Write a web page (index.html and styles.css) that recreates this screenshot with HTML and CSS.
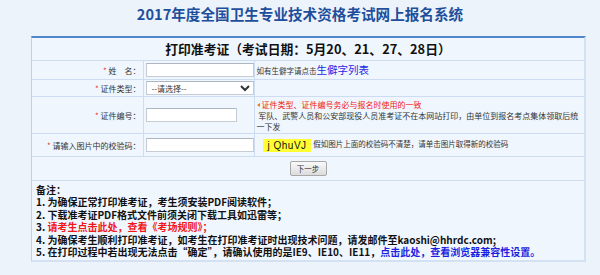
FILE: index.html
```html
<!DOCTYPE html>
<html lang="zh-CN">
<head>
    <meta charset="UTF-8">
    <title>打印准考证</title>
    <link rel="stylesheet" href="styles.css">
</head>
<body>
    <h1 class="site-title">2017年度全国卫生专业技术资格考试网上报名系统</h1>
    <div class="panel">
        <table class="form-table">
            <colgroup>
                <col class="col-label">
                <col class="col-field">
                <col>
            </colgroup>
            <tr class="row-head">
                <th colspan="3" class="form-head">打印准考证（考试日期：5月20、21、27、28日）</th>
            </tr>
            <tr class="row-name">
                <td class="label"><span class="req">*</span> 姓　名：</td>
                <td class="field"><input type="text" class="txt"></td>
                <td class="hint">如有生僻字请点击<a href="#" class="link-big">生僻字列表</a></td>
            </tr>
            <tr class="row-type">
                <td class="label"><span class="req">*</span> 证件类型：</td>
                <td class="field">
                    <select class="sel">
                        <option>--请选择--</option>
                    </select>
                </td>
                <td class="hint"></td>
            </tr>
            <tr class="row-id">
                <td class="label"><span class="req">*</span> 证件编号：</td>
                <td class="field"><input type="text" class="txt short"></td>
                <td class="hint">
                    <div class="warn"><span class="tri"></span>证件类型、证件编号务必与报名时使用的一致</div>
                    <div class="note">&nbsp;军队、武警人员和公安部现役人员准考证不在本网站打印，由单位到报名考点集体领取后统一下发</div>
                </td>
            </tr>
            <tr class="row-code">
                <td class="label"><span class="req">*</span> 请输入图片中的校验码：</td>
                <td class="field"><input type="text" class="txt"></td>
                <td class="hint"><span class="captcha">j QhuVJ</span> 假如图片上面的校验码不清楚，请单击图片取得新的校验码</td>
            </tr>
            <tr class="row-btn">
                <td colspan="3"><button class="btn">下一步</button></td>
            </tr>
            <tr class="row-notes">
                <td colspan="3" class="remarks">
                    <div>备注：</div>
                    <div>1. 为确保正常打印准考证，考生须安装PDF阅读软件；</div>
                    <div>2. 下载准考证PDF格式文件前须关闭下载工具如迅雷等；</div>
                    <div>3. <a href="#" class="red">请考生点击此处，查看《考场规则》；</a></div>
                    <div>4. 为确保考生顺利打印准考证，如考生在打印准考证时出现技术问题，请发邮件至kaoshi@hhrdc.com;</div>
                    <div>5. 在打印过程中若出现无法点击“确定”，请确认使用的是IE9、IE10、IE11，<a href="#" class="blue">点击此处，查看浏览器兼容性设置。</a></div>
                </td>
            </tr>
        </table>
    </div>
</body>
</html>
```

FILE: styles.css
```css
body {
    margin: 0;
    background-color: #edf3fb;
    font-family: "Noto Sans CJK SC", "Noto Sans", sans-serif;
    color: #333;
}
.site-title {
    margin: 0;
    height: 36px;
    line-height: 28px;
    text-align: center;
    font-size: 14.6px;
    font-weight: bold;
    color: #1f4f9c;
}
.panel {
    margin-left: 31px;
    width: 552px;
    border-top: 2px solid #4f86c9;
    border-left: 1px solid #bcd1ec;
    border-right: 2px solid #d3e1f2;
    border-bottom: 2px solid #d3e1f2;
    background: #f0f6fd;
}
.form-table {
    width: 100%;
    border-collapse: collapse;
    table-layout: fixed;
}
.col-label {
    width: 111px;
}
.col-field {
    width: 111px;
}
.form-table td,
.form-table th {
    padding: 0;
    border-top: 1px solid #cddcf0;
    line-height: 11px;
    font-size: 8px;
}
.form-table tr:first-child th {
    border-top: none;
}
.form-head {
    font-size: 12.8px !important;
    line-height: 16px !important;
    font-weight: bold;
    color: #111;
    text-align: center;
}
.label {
    padding-right: 2px !important;
    text-align: right;
    color: #333;
    border-right: 1px solid #cddcf0;
}
.req {
    color: #e53333;
}
.field {
    padding-left: 2px !important;
    border-right: 1px solid #cddcf0;
}
.hint {
    padding-left: 2px !important;
    font-size: 7.5px !important;
    color: #333;
}
.row-head th { height: 22px; }
.row-name td { height: 18px; }
.row-type td { height: 16px; }
.row-id td { height: 36px; }
.row-code td { height: 22px; }
.row-btn td { height: 23px; text-align: center; }
.txt,
.sel {
    box-sizing: border-box;
    width: 108px;
    height: 14px;
    margin: 0;
    padding: 0 3px;
    border: 1px solid #c5ccd6;
    border-top-color: #aeb6c1;
    background: #fff;
    font-size: 8px;
    vertical-align: middle;
}
.sel {
    font-family: "Noto Sans CJK SC", sans-serif;
    color: #333;
    padding: 0 1px;
}
.txt.short {
    width: 91px;
}
.link-big {
    font-size: 10.5px;
    line-height: 11px;
    color: #2727e6;
    text-decoration: none;
}
.warn {
    color: #f02020;
    font-size: 8px;
    line-height: 11px;
}
.tri {
    display: inline-block;
    width: 0;
    height: 0;
    margin-right: 2px;
    border-top: 2px solid transparent;
    border-bottom: 2px solid transparent;
    border-right: 3px solid #f07a1a;
    vertical-align: middle;
}
.note {
    font-size: 8px;
    line-height: 11px;
    color: #333;
}
.captcha {
    display: inline-block;
    width: 48px;
    height: 13px;
    margin-left: 6px;
    margin-right: 1px;
    padding-left: 5px;
    box-sizing: border-box;
    background: #ffff33;
    font-family: "Liberation Sans", sans-serif;
    font-size: 10px;
    line-height: 13px;
    color: #111;
    vertical-align: middle;
    letter-spacing: 0.5px;
}
.btn {
    width: 37px;
    height: 15px;
    padding: 0;
    border: 1px solid #a8a8a8;
    border-radius: 2px;
    background: linear-gradient(#fafafa, #dcdcdc);
    font-family: "Noto Sans CJK SC", sans-serif;
    font-size: 7.5px;
    line-height: 13px;
    color: #333;
    vertical-align: middle;
}
.row-notes td { height: 76px; }
.remarks {
    padding: 3px 0 0 4px !important;
    vertical-align: top;
    font-size: 10px !important;
    font-weight: bold;
    line-height: 12.4px !important;
    color: #111;
}
.remarks a {
    text-decoration: none;
}
.red {
    color: #f01818;
}
.blue {
    color: #1f1fe0;
}
```
